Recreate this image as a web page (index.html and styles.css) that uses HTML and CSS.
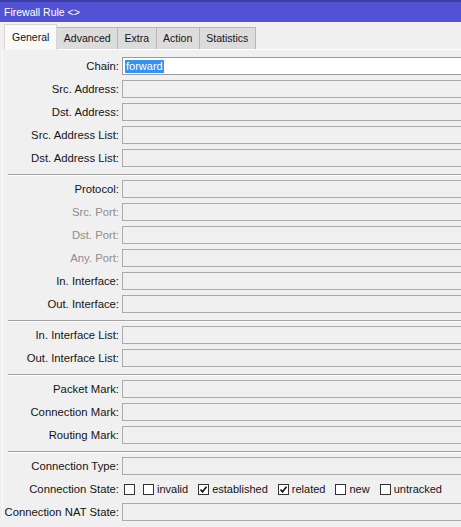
FILE: index.html
```html
<!DOCTYPE html>
<html>
  <head>
    <title>Firewall Rule</title>
    <link rel="stylesheet" href="styles.css">
  </head>
  <body>
    <div class="window">
      <div class="titlebar">Firewall Rule &lt;&gt;</div>

      <div class="tabs">
        <span class="tab active">General</span>
        <span class="tab">Advanced</span>
        <span class="tab">Extra</span>
        <span class="tab">Action</span>
        <span class="tab">Statistics</span>
      </div>

      <div class="panel">
        <div class="row">
          <label>Chain:</label>
          <div class="field editable"><span class="selected">forward</span></div>
        </div>
        <div class="row"><label>Src. Address:</label><div class="field"></div></div>
        <div class="row"><label>Dst. Address:</label><div class="field"></div></div>
        <div class="row"><label>Src. Address List:</label><div class="field"></div></div>
        <div class="row"><label>Dst. Address List:</label><div class="field"></div></div>

        <div class="separator"></div>

        <div class="row"><label>Protocol:</label><div class="field"></div></div>
        <div class="row"><label class="disabled">Src. Port:</label><div class="field"></div></div>
        <div class="row"><label class="disabled">Dst. Port:</label><div class="field"></div></div>
        <div class="row"><label class="disabled">Any. Port:</label><div class="field"></div></div>
        <div class="row"><label>In. Interface:</label><div class="field"></div></div>
        <div class="row"><label>Out. Interface:</label><div class="field"></div></div>

        <div class="separator"></div>

        <div class="row"><label>In. Interface List:</label><div class="field"></div></div>
        <div class="row"><label>Out. Interface List:</label><div class="field"></div></div>

        <div class="separator"></div>

        <div class="row"><label>Packet Mark:</label><div class="field"></div></div>
        <div class="row"><label>Connection Mark:</label><div class="field"></div></div>
        <div class="row"><label>Routing Mark:</label><div class="field"></div></div>

        <div class="separator"></div>

        <div class="row"><label>Connection Type:</label><div class="field"></div></div>
        <div class="row">
          <label>Connection State:</label>
          <div class="checks">
            <span class="check blank"><span class="box"></span></span>
            <span class="check"><span class="box"></span>invalid</span>
            <span class="check"><span class="box checked"><svg viewBox="0 0 9 9"><path d="M1.5 4.5 L3.5 6.8 L7.5 1.8"/></svg></span>established</span>
            <span class="check"><span class="box checked"><svg viewBox="0 0 9 9"><path d="M1.5 4.5 L3.5 6.8 L7.5 1.8"/></svg></span>related</span>
            <span class="check"><span class="box"></span>new</span>
            <span class="check"><span class="box"></span>untracked</span>
          </div>
        </div>
        <div class="row"><label>Connection NAT State:</label><div class="field"></div></div>
      </div>
    </div>
  </body>
</html>
```

FILE: styles.css
```css
body {
  margin: 0;
  overflow: hidden;
  background-color: #f0f0f0;
  font-family: "Liberation Sans", Arial, sans-serif;
  font-size: 11px;
  color: #141414;
}

/* the dialog is wider than the screen, fields run off the right side */
.window {
  width: 461px;
  height: 527px;
  overflow: hidden;
  background-color: #f0f0f0;
}

/* title bar */
.titlebar {
  height: 20px;
  line-height: 21px;
  padding-left: 4px;
  border-top: 2px solid #3c3ca6;
  background-color: #5252d4;
  color: #ffffff;
  font-size: 10.5px;
}

/* tab strip */
.tabs {
  display: flex;
  align-items: flex-end;
  height: 27px;
  padding-left: 4px;
}

.tab {
  height: 21px;
  line-height: 21px;
  padding: 0 6.5px;
  background-color: #dcdcdc;
  border: 1px solid #b5b5b5;
  border-bottom: none;
  border-left: none;
  font-size: 10.5px;
}

.tab.active {
  height: 25px;
  line-height: 24px;
  padding: 0 7px;
  margin-bottom: -1px;
  position: relative;
  background-color: #f9f9f9;
  border-color: #d6d6d6;
  border-left: 1px solid #d6d6d6;
}

/* form area */
.panel {
  display: flex;
  flex-direction: column;
  gap: 5px;
  margin-left: 2px;
  padding-top: 7px;
  border-top: 1px solid #ffffff;
  border-left: 1px solid #fbfbfb;
}

.row {
  display: grid;
  grid-template-columns: 116px 1fr;
  column-gap: 3px;
  align-items: center;
  height: 18px;
}

.row label {
  text-align: right;
  white-space: nowrap;
  font-size: 11.3px;
}

.row label.disabled {
  color: #8e8e8e;
}

.field {
  height: 16px;
  border: 1px solid #aaaaaa;
  border-right: none;
  background-color: #f0f0f0;
}

.field.editable {
  display: flex;
  align-items: center;
  background-color: #ffffff;
  border-color: #9c9c9c;
}

.selected {
  margin-left: 2px;
  padding: 0 1px;
  line-height: 13px;
  background-color: #3393f0;
  color: #ffffff;
}

.separator {
  margin: 2px 0 -1px 5px;
  border-top: 1px solid #a3a3a3;
  border-bottom: 1px solid #ffffff;
}

/* connection state checkboxes */
.checks {
  display: flex;
  align-items: center;
  gap: 10px;
  padding-left: 2px;
}

.check {
  display: flex;
  align-items: center;
  gap: 3px;
}

.check.blank {
  margin-right: -2px;
}

.box {
  display: flex;
  align-items: center;
  justify-content: center;
  width: 9px;
  height: 9px;
  border: 1px solid #333333;
  background-color: #ffffff;
}

.box svg {
  width: 9px;
  height: 9px;
}

.box svg path {
  fill: none;
  stroke: #1a1a1a;
  stroke-width: 1.7;
}
```
